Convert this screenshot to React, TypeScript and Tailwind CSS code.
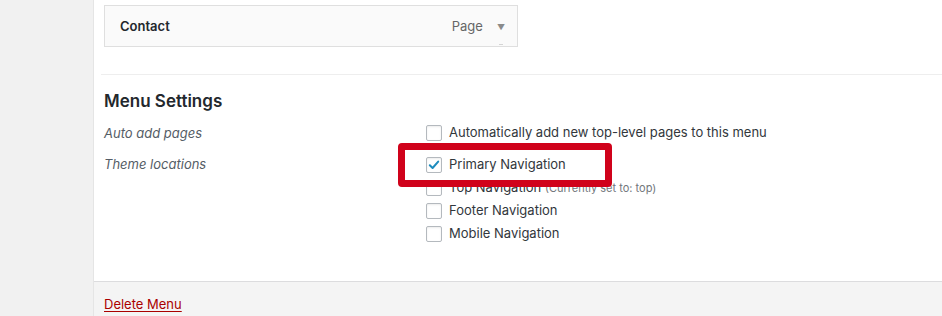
import type { ReactNode } from "react";

const font = { fontFamily: "Inter, 'Noto Sans', sans-serif" };

function Checkbox({ checked = false }: { checked?: boolean }) {
  return (
    <span className="flex size-4 shrink-0 items-center justify-center rounded-[2px] border border-[#b4b9be] bg-white shadow-[inset_0_1px_2px_rgba(0,0,0,0.08)]">
      {checked ? (
        <svg aria-hidden width="14" height="14" viewBox="0 0 14 14">
          <path d="M2.8 7.2 L5.6 10 L11.2 3.6" fill="none" stroke="#1e8cbe" strokeWidth="2" strokeLinecap="round" strokeLinejoin="round" />
        </svg>
      ) : null}
    </span>
  );
}

function CheckRow({ checked, children }: { checked?: boolean; children: ReactNode }) {
  return (
    <label className="flex h-[23px] items-center gap-[7px] text-[13px] text-[#32373c]">
      <Checkbox checked={checked} />
      <span>{children}</span>
    </label>
  );
}

export default function App() {
  return (
    <div className="flex h-[316px] w-[942px] overflow-hidden bg-[#f1f1f1]" style={font}>
      <div className="w-[93px] shrink-0" />
      <div className="relative flex flex-1 flex-col border-l border-[#e5e5e5] bg-white">
        <div className="flex-1 pl-[10px]">
          {/* collapsed menu item */}
          <div className="relative mt-[5px] flex h-[42px] w-[414px] items-center border border-[#dfdfdf] bg-[#fafafa] pl-[15px] pr-[12px] pt-[2px]">
            <span className="flex-1 text-[13px] font-semibold text-[#23282d]">Contact</span>
            <span className="text-[13px] text-[#666]">Page</span>
            <span className="ml-[14px] text-[8px] text-[#8a8a8a]">▼</span>
            <span className="absolute bottom-[1px] right-[14px] h-px w-[4px] bg-[#d5d5d5]" />
          </div>

          <div className="ml-[-3px] mt-[27px] h-px bg-[#eeeeee]" />

          <h3 className="mt-[14px] text-[17px] leading-6 font-semibold text-[#23282d]">Menu Settings</h3>

          <div className="mt-[8px] flex">
            <div className="w-[322px] shrink-0 pt-[3px] text-[13px] leading-[19px] italic text-[#555d66]">Auto add pages</div>
            <div className="flex flex-col">
              <CheckRow>Automatically add new top-level pages to this menu</CheckRow>
            </div>
          </div>

          <div className="mt-[9px] flex">
            <div className="w-[322px] shrink-0 pt-[2px] text-[13px] leading-[19px] italic text-[#555d66]">Theme locations</div>
            <div className="flex flex-col">
              <CheckRow checked>Primary Navigation</CheckRow>
              <CheckRow>
                Top Navigation <span className="text-[11px] text-[#72777c]">(Currently set to: top)</span>
              </CheckRow>
              <CheckRow>Footer Navigation</CheckRow>
              <CheckRow>Mobile Navigation</CheckRow>
            </div>
          </div>
        </div>

        <div className="h-[35px] border-t border-[#dcdcde] bg-[#f4f4f4] pl-[10px] pt-[9px]">
          <a className="text-[13px] leading-4 text-[#a00] underline underline-offset-2" href="#">Delete Menu</a>
        </div>

        {/* annotation highlight */}
        <div className="pointer-events-none absolute left-[304px] top-[143px] h-[44px] w-[214px] rounded-[4px] border-[7px] border-[#d0021b]" />
      </div>
    </div>
  );
}
